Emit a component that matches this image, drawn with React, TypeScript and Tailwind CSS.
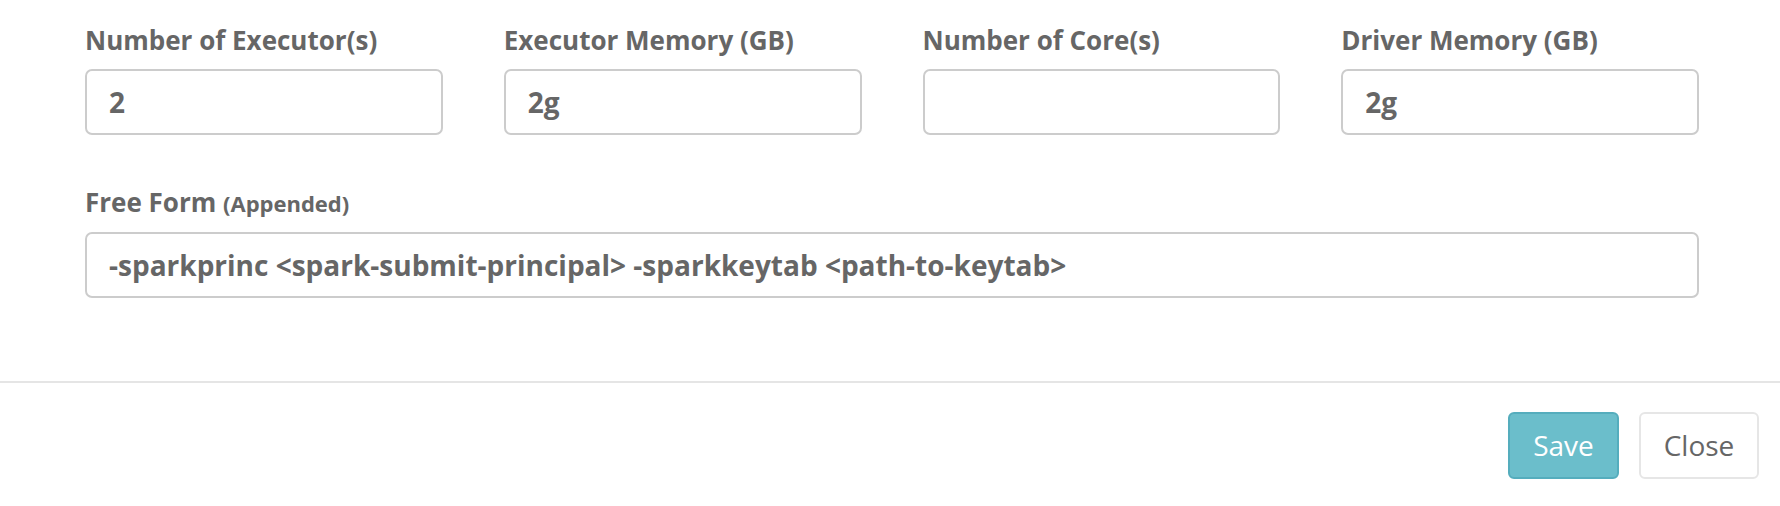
import React from "react";

const fields = [
  { label: "Number of Executor(s)", value: "2" },
  { label: "Executor Memory (GB)", value: "2g" },
  { label: "Number of Core(s)", value: "" },
  { label: "Driver Memory (GB)", value: "2g" },
];

export default function App() {
  return (
    <div className="w-full h-[506px] bg-white text-[#666] font-['Open_Sans',sans-serif] flex flex-col">
      <div className="pl-[85px] pr-[81px] pt-[22px]">
        <div className="grid grid-cols-4 gap-x-[61px]">
          {fields.map((f) => (
            <div key={f.label} className="flex flex-col">
              <label className="text-[26px] leading-[36px] font-bold mb-[11px] whitespace-nowrap">
                {f.label}
              </label>
              <input
                readOnly
                value={f.value}
                className="h-[66px] w-full border-2 border-[#cccccc] rounded-[7px] pl-[22px] text-[28px] font-bold text-[#666] outline-none bg-white"
              />
            </div>
          ))}
        </div>
        <div className="flex flex-col mt-[49px]">
          <label className="h-[36px] text-[26px] leading-[36px] font-bold mb-[12px] whitespace-nowrap">
            Free Form <span className="text-[22px] leading-[36px]">(Appended)</span>
          </label>
          <input
            readOnly
            value="-sparkprinc <spark-submit-principal> -sparkkeytab <path-to-keytab>"
            className="h-[66px] w-full border-2 border-[#cccccc] rounded-[7px] pl-[22px] text-[28px] font-bold text-[#666] outline-none bg-white"
          />
        </div>
      </div>
      <div className="mt-[83px] h-[2px] bg-[#e5e5e5]" />
      <div className="flex justify-end gap-[20px] pr-[21px] pt-[29px]">
        <button className="h-[67px] w-[111px] flex items-center justify-center border-2 border-[#55adbd] bg-[#6bbecb] text-white text-[28px] rounded-[6px] leading-[37px]">
          Save
        </button>
        <button className="h-[67px] w-[120px] flex items-center justify-center border-2 border-[#e6e6e6] bg-white text-[#666] text-[28px] rounded-[6px] leading-[37px]">
          Close
        </button>
      </div>
    </div>
  );
}
